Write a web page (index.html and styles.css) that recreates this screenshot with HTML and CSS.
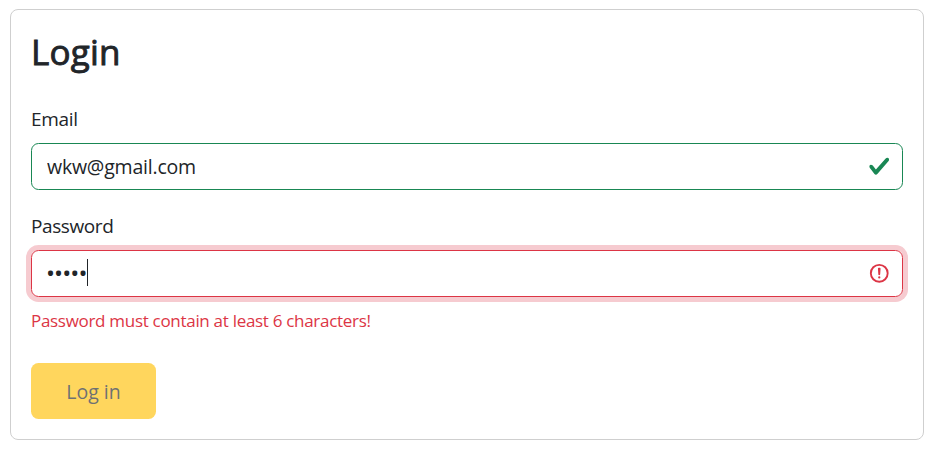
FILE: index.html
```html
<!DOCTYPE html>
<html lang="en">
<head>
<meta charset="utf-8">
<title>Login</title>
<link rel="stylesheet" href="styles.css">
</head>
<body>
<form class="card">
  <h1 class="title">Login</h1>
  <label class="label" for="email">Email</label>
  <div class="field valid">
    <input class="input" id="email" type="text" value="wkw@gmail.com">
    <svg class="icon" viewBox="0 0 8 8"><path fill="#198754" d="M2.3 6.73.6 4.53c-.4-1.04.46-1.4 1.1-.8l1.1 1.4 3.4-3.8c.6-.63 1.6-.27 1.2.7l-4 4.6c-.43.5-.8.4-1.1.1z"/></svg>
  </div>
  <label class="label password-label">Password</label>
  <div class="field invalid">
    <span class="dots">•••••</span><span class="caret"></span>
    <svg class="icon" viewBox="0 0 12 12" fill="none" stroke="#dc3545"><circle cx="6" cy="6" r="4.5"/><path stroke-linejoin="round" d="M5.8 3.6h.4L6 6.5z"/><circle cx="6" cy="8.2" r=".6" fill="#dc3545" stroke="none"/></svg>
  </div>
  <p class="error">Password must contain at least 6 characters!</p>
  <button class="button" type="button" disabled>Log in</button>
</form>
</body>
</html>
```
FILE: styles.css
```css
* { box-sizing: border-box; }
body {
  margin: 0;
  padding: 9px 13px 9px 10px;
  background: #fff;
  color: #212529;
  font: 20px/30px "Open Sans", "Noto Sans", sans-serif;
}
.card {
  height: 431px;
  padding: 20px;
  border: 1px solid #cfcfcf;
  border-radius: 8px;
}
.title {
  margin: 1px 0 31px;
  font: 400 35px/42px "Open Sans", sans-serif;
  letter-spacing: .2px;
  -webkit-text-stroke: .9px #212529;
}
.label {
  display: block;
  height: 30px;
  margin-bottom: 9px;
  font-size: 19px;
  letter-spacing: -.3px;
}
.password-label { letter-spacing: -.4px; }
.field {
  display: flex;
  align-items: center;
  height: 47px;
  padding: 0 12px 0 15px;
  border: 1px solid;
  border-radius: 7.5px;
}
.valid {
  margin-bottom: 21px;
  border-color: #198754;
}
.invalid {
  border-color: #dc3545;
  box-shadow: 0 0 0 5px #f6cbd0;
}
.input {
  flex: 1;
  min-width: 0;
  padding: 0;
  border: 0;
  outline: 0;
  background: none;
  color: inherit;
  font: inherit;
  font-size: 19.5px;
  letter-spacing: -.2px;
}
.icon {
  width: 22.5px;
  height: 22.5px;
  margin-left: auto;
}
.dots {
  margin: -1px 0 0 -1px;
  font-size: 24px;
  letter-spacing: -.9px;
}
.caret {
  width: 1px;
  height: 27px;
  margin-top: -2px;
  background: #212529;
}
.error {
  height: 26px;
  margin: 11px 0 29px;
  color: #dc3545;
  font-size: 17px;
  line-height: 26px;
  letter-spacing: -.3px;
}
.button {
  display: block;
  width: 125px;
  height: 56px;
  padding: 2px 0 0;
  border: 0;
  border-radius: 7.5px;
  background: #ffc107;
  color: #212529;
  font: inherit;
  font-size: 19.5px;
  opacity: .65;
}
```
